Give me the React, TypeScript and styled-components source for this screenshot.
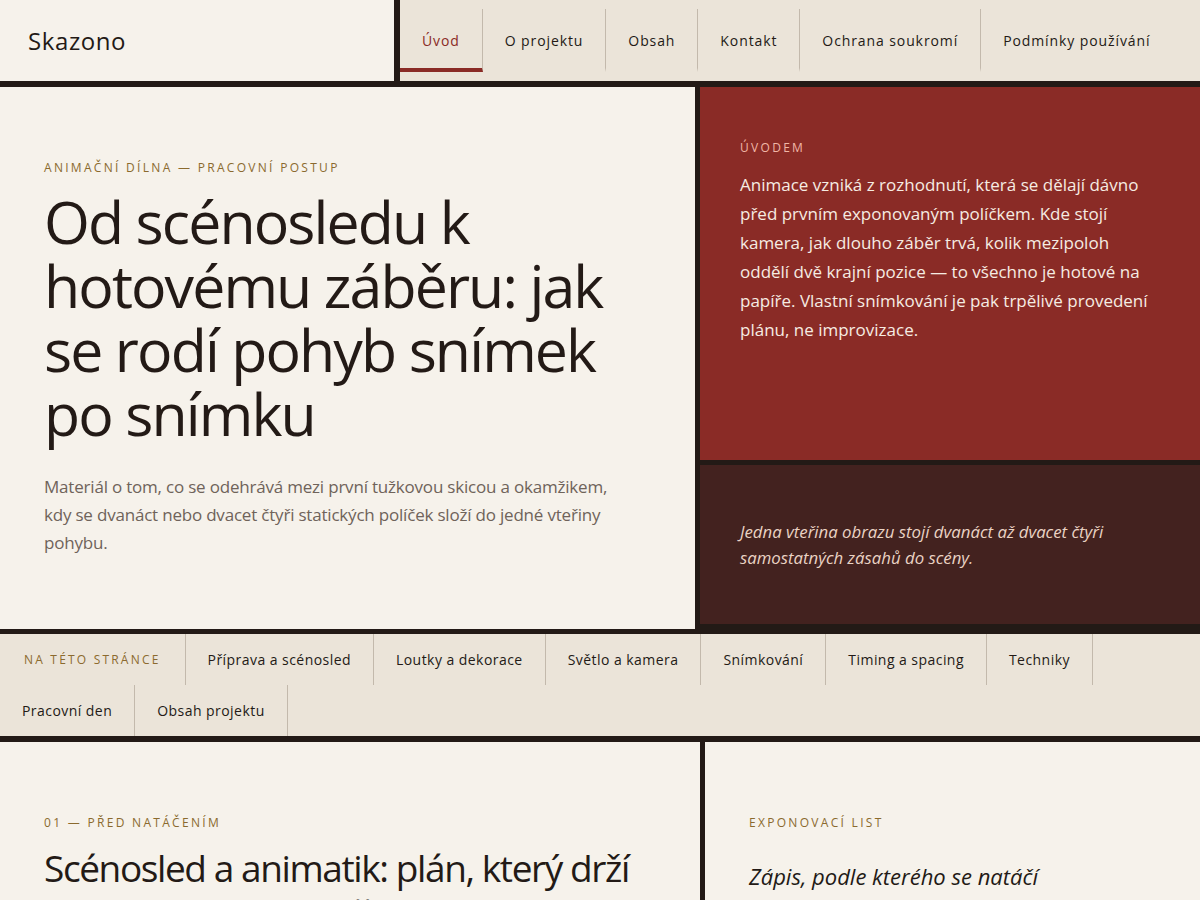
import React from 'react';
import styled, { createGlobalStyle } from 'styled-components';

const GlobalStyle = createGlobalStyle`
  html, body {
    margin: 0;
    padding: 0;
    background: #f6f2eb;
  }
  body {
    font-family: "Open Sans", "Noto Sans", sans-serif;
    color: #231a16;
  }
  * {
    box-sizing: border-box;
  }
`;

const Page = styled.div`
  width: 1200px;
  height: 900px;
  overflow: hidden;
  background: #231a16;
`;

const Header = styled.header`
  display: grid;
  grid-template-columns: 394px 1fr;
  column-gap: 6px;
  height: 81px;
  margin-bottom: 6px;
`;

const Logo = styled.div`
  background: #f6f2eb;
  display: flex;
  align-items: center;
  padding-left: 28px;
  font-size: 24px;
  letter-spacing: 0.6px;
  color: #231a16;
`;

const TopNav = styled.nav`
  background: #ebe4d9;
  display: flex;
  padding: 9px 0;
`;

const TopLink = styled.a<{ $active?: boolean }>`
  display: flex;
  align-items: center;
  padding: 4px 22px 0;
  font-size: 14px;
  letter-spacing: 0.9px;
  color: ${(p) => (p.$active ? '#8a2b26' : '#231a16')};
  border-right: 1px solid #c3b9ac;
  border-bottom: 4px solid ${(p) => (p.$active ? '#8a2b26' : 'transparent')};
  text-decoration: none;

  &:last-child {
    border-right: none;
  }
`;

const Hero = styled.section`
  display: grid;
  grid-template-columns: 695px 1fr;
  column-gap: 5px;
  height: 542px;
  margin-bottom: 5px;
`;

const HeroMain = styled.div`
  background: #f6f2eb;
  display: flex;
  flex-direction: column;
  justify-content: center;
  padding: 0 44px;
`;

const Eyebrow = styled.div<{ $tone?: 'gold' | 'rose' }>`
  font-size: 12px;
  letter-spacing: 2.3px;
  text-transform: uppercase;
  color: ${(p) => (p.$tone === 'rose' ? '#f0b7a6' : '#8b6a2e')};
`;

const HeroTitle = styled.h1`
  margin: 13px 0 28px;
  font-size: 59px;
  font-weight: 400;
  line-height: 64px;
  letter-spacing: -1.9px;
  color: #231a16;
  max-width: 600px;
`;

const Lead = styled.p`
  margin: 0;
  font-size: 17px;
  line-height: 28px;
  letter-spacing: -0.2px;
  color: #6f635a;
  max-width: 564px;
`;

const HeroSide = styled.div`
  display: flex;
  flex-direction: column;
  gap: 5px;
  padding-bottom: 5px;
`;

const IntroCard = styled.div`
  background: #8a2b26;
  height: 373px;
  padding: 52px 40px 0;
`;

const IntroText = styled.p`
  margin: 14px 0 0;
  font-size: 17px;
  line-height: 29px;
  color: #f6ece2;
`;

const QuoteCard = styled.div`
  flex: 1;
  background: #43221f;
  display: flex;
  align-items: center;
  padding: 0 40px;
`;

const Quote = styled.p`
  margin: 0;
  font-size: 16.8px;
  font-style: italic;
  line-height: 26px;
  color: #ead3c4;
`;

const SectionNav = styled.nav`
  background: #ebe4d9;
  display: flex;
  flex-wrap: wrap;
  margin-bottom: 6px;
`;

const SectionLabel = styled.span`
  display: flex;
  align-items: center;
  height: 51px;
  padding: 0 24px;
  font-size: 12px;
  letter-spacing: 2.2px;
  color: #8b6a2e;
  border-right: 1px solid #c3b9ac;
`;

const SectionLink = styled.a`
  display: flex;
  align-items: center;
  height: 51px;
  padding: 0 22px;
  font-size: 14px;
  letter-spacing: 0.45px;
  color: #231a16;
  border-right: 1px solid #c3b9ac;
  text-decoration: none;
`;

const Content = styled.section`
  display: grid;
  grid-template-columns: 700px 1fr;
  column-gap: 5px;
  height: 200px;
`;

const Article = styled.article`
  background: #f6f2eb;
  padding: 72px 44px 0;
`;

const ArticleTitle = styled.h2`
  margin: 14px 0 0;
  font-size: 37px;
  font-weight: 400;
  line-height: 46px;
  letter-spacing: -1.4px;
  color: #231a16;
`;

const Aside = styled.aside`
  background: #f6f2eb;
  padding: 72px 44px 0;
`;

const AsideTitle = styled.h3`
  margin: 30px 0 0;
  font-size: 22px;
  font-weight: 400;
  font-style: italic;
  line-height: 30px;
  color: #231a16;
`;

const topLinks = ['Úvod', 'O projektu', 'Obsah', 'Kontakt', 'Ochrana soukromí', 'Podmínky používání'];

const sectionLinks = [
  'Příprava a scénosled',
  'Loutky a dekorace',
  'Světlo a kamera',
  'Snímkování',
  'Timing a spacing',
  'Techniky',
  'Pracovní den',
  'Obsah projektu',
];

export default function App() {
  return (
    <Page>
      <GlobalStyle />
      <Header>
        <Logo>Skazono</Logo>
        <TopNav>
          {topLinks.map((label, i) => (
            <TopLink key={label} href="#" $active={i === 0}>
              {label}
            </TopLink>
          ))}
        </TopNav>
      </Header>

      <Hero>
        <HeroMain>
          <Eyebrow>Animační dílna — pracovní postup</Eyebrow>
          <HeroTitle>Od scénosledu k hotovému záběru: jak se rodí pohyb snímek po snímku</HeroTitle>
          <Lead>
            Materiál o tom, co se odehrává mezi první tužkovou skicou a okamžikem, kdy se dvanáct nebo
            dvacet čtyři statických políček složí do jedné vteřiny pohybu.
          </Lead>
        </HeroMain>
        <HeroSide>
          <IntroCard>
            <Eyebrow $tone="rose">Úvodem</Eyebrow>
            <IntroText>
              Animace vzniká z rozhodnutí, která se dělají dávno před prvním exponovaným políčkem. Kde
              stojí kamera, jak dlouho záběr trvá, kolik mezipoloh oddělí dvě krajní pozice — to všechno
              je hotové na papíře. Vlastní snímkování je pak trpělivé provedení plánu, ne improvizace.
            </IntroText>
          </IntroCard>
          <QuoteCard>
            <Quote>Jedna vteřina obrazu stojí dvanáct až dvacet čtyři samostatných zásahů do scény.</Quote>
          </QuoteCard>
        </HeroSide>
      </Hero>

      <SectionNav>
        <SectionLabel>NA TÉTO STRÁNCE</SectionLabel>
        {sectionLinks.map((label) => (
          <SectionLink key={label} href="#">
            {label}
          </SectionLink>
        ))}
      </SectionNav>

      <Content>
        <Article>
          <Eyebrow>01 — Před natáčením</Eyebrow>
          <ArticleTitle>Scénosled a animatik: plán, který drží celý film pohromadě</ArticleTitle>
        </Article>
        <Aside>
          <Eyebrow>Exponovací list</Eyebrow>
          <AsideTitle>Zápis, podle kterého se natáčí</AsideTitle>
        </Aside>
      </Content>
    </Page>
  );
}
